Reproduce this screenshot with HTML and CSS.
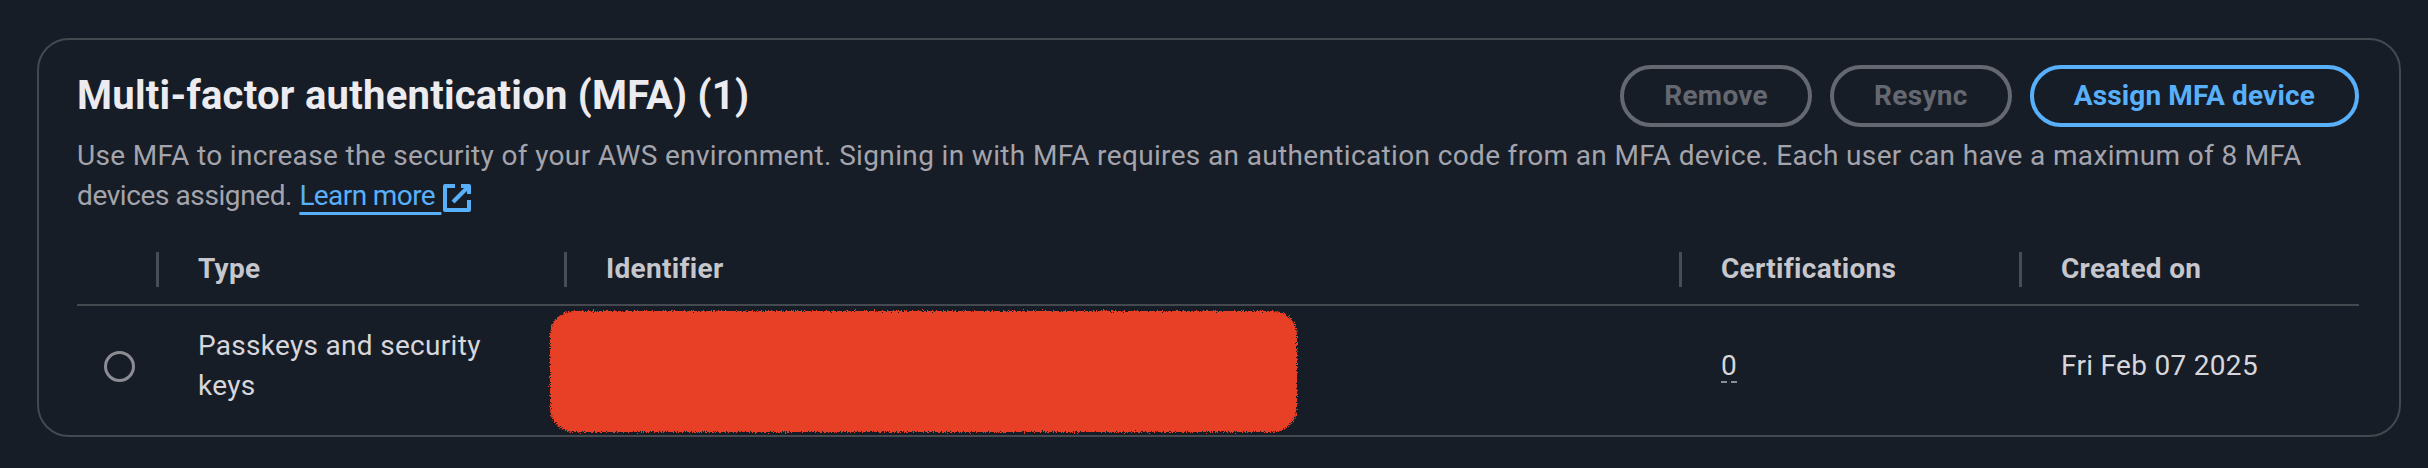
FILE: index.html
```html
<!DOCTYPE html>
<html lang="en">
<head>
<meta charset="utf-8">
<title>Multi-factor authentication (MFA)</title>
<link rel="stylesheet" href="styles.css">
</head>
<body>
<svg class="defs" width="0" height="0" aria-hidden="true">
  <filter id="rough" x="-5%" y="-10%" width="110%" height="120%">
    <feTurbulence type="fractalNoise" baseFrequency="0.9" numOctaves="2" seed="3" result="n"/>
    <feDisplacementMap in="SourceGraphic" in2="n" scale="6" xChannelSelector="R" yChannelSelector="G"/>
  </filter>
</svg>
<section class="card">
  <header class="card-header">
    <div class="title-row">
      <h2 class="title">Multi-factor authentication (MFA) (1)</h2>
      <div class="actions">
        <button class="btn btn-disabled" disabled>Remove</button>
        <button class="btn btn-disabled" disabled>Resync</button>
        <button class="btn btn-normal">Assign MFA device</button>
      </div>
    </div>
    <p class="description">Use MFA to increase the security of your AWS environment. Signing in with MFA requires an authentication code from an MFA device. Each user can have a maximum of 8 MFA <span class="tight">devices assigned.</span> <a class="link" href="#">Learn more </a><svg class="ext-icon" viewBox="0 0 16 16" width="32" height="32" aria-hidden="true"><path d="M10 2h4v4" /><path d="m6 10 8-8" /><path d="M14 9.048V14H2V2h5" /></svg></p>
  </header>
  <div class="table">
    <div class="trow thead">
      <div class="th th-select"></div>
      <div class="th"><span class="sep"></span><span>Type</span></div>
      <div class="th"><span class="sep"></span><span>Identifier</span></div>
      <div class="th"><span class="sep"></span><span>Certifications</span></div>
      <div class="th"><span class="sep"></span><span>Created on</span></div>
    </div>
    <div class="trow tbody">
      <div class="td td-select"><span class="radio"></span></div>
      <div class="td"><span class="type-text">Passkeys and security keys</span></div>
      <div class="td"></div>
      <div class="td"><span class="popover-trigger">0</span></div>
      <div class="td">Fri Feb 07 2025</div>
      <div class="redaction"></div>
    </div>
  </div>
</section>
</body>
</html>
```
FILE: styles.css
```css
html, body {
  margin: 0;
  background: #171d26;
}
body {
  padding: 38px 27px 0 37px;
  font-family: "Roboto", "Open Sans", sans-serif;
  color: #dedee3;
}
.defs {
  position: absolute;
  width: 0;
  height: 0;
}
.card {
  box-sizing: border-box;
  width: 2364px;
  border: 2px solid #44484f;
  border-radius: 32px;
  padding: 25px 40px 9px 38px;
  background: #171d26;
}
.title-row {
  display: flex;
  justify-content: space-between;
  align-items: flex-start;
}
.title {
  margin: 7px 0 0 0;
  font-size: 40px;
  line-height: 48px;
  font-weight: 700;
  letter-spacing: 0.25px;
  color: #ebebf0;
}
.actions {
  display: flex;
  gap: 18px;
}
.btn {
  box-sizing: border-box;
  height: 62px;
  padding: 0 40px;
  border: 4px solid;
  border-radius: 40px;
  background: transparent;
  font-family: "Roboto", "Open Sans", sans-serif;
  font-size: 28px;
  font-weight: 700;
  letter-spacing: 0.3px;
  line-height: 40px;
}
.btn-disabled {
  border-color: #656871;
  color: #656871;
}
.btn-normal {
  border-color: #58b0fb;
  color: #58b0fb;
  letter-spacing: 0.15px;
}
.description {
  margin: 9px 0 0 0;
  font-size: 28px;
  line-height: 40px;
  letter-spacing: 0.35px;
  color: #a4a4ad;
}
.tight {
  letter-spacing: -0.4px;
}
.link {
  color: #58b0fb;
  letter-spacing: -0.6px;
  text-decoration: underline;
  text-decoration-thickness: 3px;
  text-underline-offset: 7px;
}
.ext-icon {
  vertical-align: -9px;
  fill: none;
  stroke: #58b0fb;
  stroke-width: 2;
  stroke-linejoin: round;
}
.table {
  margin-top: 17px;
}
.trow {
  display: grid;
  grid-template-columns: 79px 408px 1115px 340px 1fr;
}
.thead {
  padding: 16px 0 15px;
  border-bottom: 2px solid #44484f;
  font-size: 28px;
  line-height: 40px;
  font-weight: 700;
  letter-spacing: 0.3px;
  color: #c6c6cd;
}
.th {
  display: flex;
  align-items: center;
  gap: 39px;
}
.sep {
  width: 3px;
  height: 35px;
  background: #474c55;
}
.tbody {
  position: relative;
  padding: 20px 0;
  font-size: 28px;
  line-height: 40px;
  letter-spacing: 0.3px;
  color: #d6d6dc;
}
.td {
  display: flex;
  align-items: center;
  padding-left: 42px;
}
.td-select {
  padding-left: 27px;
}
.radio {
  box-sizing: border-box;
  width: 31px;
  height: 31px;
  border: 3px solid #8c8c94;
  border-radius: 50%;
}
.type-text {
  max-width: 300px;
}
.popover-trigger {
  text-decoration: underline dashed #8c8c94;
  text-decoration-thickness: 2px;
  text-underline-offset: 6px;
}
.redaction {
  position: absolute;
  left: 473px;
  top: 5px;
  width: 747px;
  height: 121px;
  border-radius: 24px;
  background: #e84127;
  filter: url(#rough);
}
```
